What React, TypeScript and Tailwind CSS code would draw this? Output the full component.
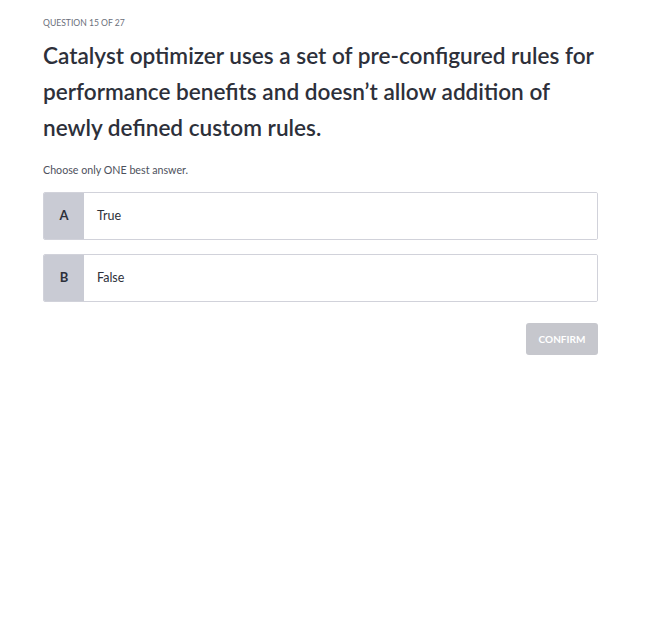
export default function App() {
  const font = { fontFamily: "Lato, 'Noto Sans', sans-serif" };
  return (
    <div className="min-h-[629px] w-[657px] bg-white" style={font}>
      <div className="pl-[43px] pr-[59px] pt-[17px]">
        <div className="text-[8.6px] uppercase leading-[12px] text-[#6b6f7b]">Question 15 of 27</div>
        <h1 className="mt-[9px] text-[22.6px] font-semibold leading-[36px] text-[#2d303a]">
          Catalyst optimizer uses a set of pre-configured rules for performance benefits and doesn’t allow addition of newly defined custom rules.
        </h1>
        <div className="mt-[17px] text-[10.7px] leading-[14px] text-[#4d515c]">Choose only ONE best answer.</div>
        <div className="mt-[15px] flex flex-col gap-[14px]">
          {[
            ["A", "True"],
            ["B", "False"],
          ].map(([l, t]) => (
            <div key={l} className="flex h-[48px] overflow-hidden rounded-[2px] border border-[#d1d2da]">
              <div className="flex w-[40px] items-center justify-center bg-[#c9cbd4] text-[13px] font-bold text-[#2d303a]">{l}</div>
              <div className="flex flex-1 items-center bg-white pl-[13px] text-[12.5px] text-[#2d303a]">{t}</div>
            </div>
          ))}
        </div>
        <div className="mt-[21px] flex justify-end">
          <button className="h-[32px] w-[72px] rounded-[3px] bg-[#c6c7cd] text-[10px] font-bold text-white">CONFIRM</button>
        </div>
      </div>
    </div>
  );
}
